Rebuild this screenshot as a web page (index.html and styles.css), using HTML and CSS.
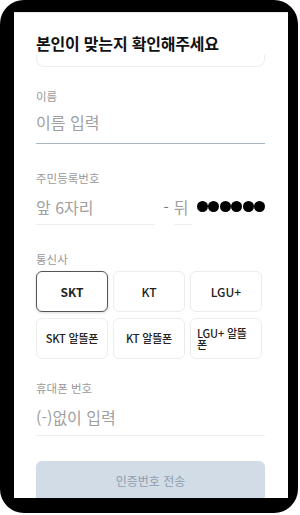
FILE: index.html
```html
<!DOCTYPE html>
<html lang="ko">
<head>
<meta charset="utf-8">
<link rel="stylesheet" href="styles.css">
</head>
<body>
<div class="phone">
  <div class="screen">
    <div class="header">
      <h1 class="title">본인이 맞는지 확인해주세요</h1>
      <div class="header-card"></div>
    </div>

    <div class="field field-name">
      <div class="label">이름</div>
      <div class="input input-active">이름 입력</div>
    </div>

    <div class="field field-rrn">
      <div class="label">주민등록번호</div>
      <div class="rrn-row">
        <div class="input rrn-front">앞 6자리</div>
        <span class="dash">-</span>
        <div class="input rrn-back">뒤</div>
        <div class="dots">
          <span class="dot"></span><span class="dot"></span><span class="dot"></span><span class="dot"></span><span class="dot"></span><span class="dot"></span>
        </div>
      </div>
    </div>

    <div class="field field-carrier">
      <div class="label">통신사</div>
      <div class="carriers">
        <button class="carrier selected">SKT</button>
        <button class="carrier">KT</button>
        <button class="carrier">LGU+</button>
        <button class="carrier small">SKT 알뜰폰</button>
        <button class="carrier small">KT 알뜰폰</button>
        <button class="carrier small wrap">LGU+ 알뜰폰</button>
      </div>
    </div>

    <div class="field field-phone">
      <div class="label">휴대폰 번호</div>
      <div class="input">(-)없이 입력</div>
    </div>

    <button class="submit">인증번호 전송</button>
  </div>
</div>
</body>
</html>
```

FILE: styles.css
```css
* { box-sizing: border-box; }
html, body { margin: 0; padding: 0; background: #fff; }
body {
  font-family: "Noto Sans CJK KR", "Noto Sans", sans-serif;
  width: 300px;
  height: 515px;
}
.phone {
  width: 298px;
  height: 513px;
  background: #000;
  border-radius: 24px;
  padding: 12px 10px 15px 14px;
}
.screen {
  width: 274px;
  height: 486px;
  background: #fff;
  overflow: hidden;
  padding: 0 23px 0 22px;
  border-top: 1px solid #ececec;
}
.header { padding-top: 18px; }
.title {
  margin: 0;
  font-size: 16px;
  line-height: 24px;
  font-weight: 700;
  color: #111;
  letter-spacing: -0.2px;
}
.header-card {
  height: 12px;
  border: 1px solid #ececec;
  border-top: none;
  border-radius: 0 0 8px 8px;
}
.field { display: flex; flex-direction: column; }
.label {
  font-size: 11.5px;
  line-height: 16px;
  color: #9a9a9a;
}
.input {
  font-size: 16px;
  line-height: 24px;
  color: #a0a0a0;
  border-bottom: 1px solid #efefef;
}
.field-name { margin-top: 21px; }
.field-name .label { margin-bottom: 6px; }
.input-active {
  padding-bottom: 9px;
  border-bottom: 1.5px solid #a9b6c6;
}
.field-rrn { margin-top: 26px; }
.field-rrn .label { margin-bottom: 9px; }
.rrn-row { display: flex; align-items: flex-start; }
.rrn-front { width: 121px; padding-bottom: 5px; }
.dash {
  font-size: 15px;
  line-height: 24px;
  color: #777;
  margin: 0 5px 0 8px;
}
.rrn-back { width: 18px; padding-bottom: 5px; }
.dots {
  display: flex;
  gap: 0.5px;
  margin-left: 5px;
  padding-top: 6px;
}
.dot {
  width: 11px;
  height: 11px;
  border-radius: 50%;
  background: #000;
}
.field-carrier { margin-top: 26px; }
.field-carrier .label { margin-bottom: 4px; }
.carriers {
  display: grid;
  grid-template-columns: repeat(3, 72px);
  grid-auto-rows: 41px;
  column-gap: 5px;
  row-gap: 6px;
}
.carrier {
  font-family: inherit;
  background: #fff;
  border: 1px solid #ececec;
  border-radius: 6px;
  font-size: 12px;
  font-weight: 500;
  color: #222;
  padding: 0 10px;
  line-height: 11px;
}
.carrier.selected {
  border: 1px solid #555;
  font-weight: 700;
  box-shadow: 0 1px 3px rgba(0,0,0,0.15);
}
.carrier.small { font-size: 11px; padding: 0 4px; letter-spacing: -0.2px; }
.carrier.wrap { text-align: left; padding: 0 12px 0 6px; line-height: 10.5px; }
.field-phone { margin-top: 21px; }
.field-phone .label { margin-bottom: 9px; }
.field-phone .input { padding-bottom: 6px; }
.submit {
  display: block;
  width: 100%;
  margin-top: 25px;
  height: 44px;
  border: none;
  border-radius: 6px;
  background: #d2dce6;
  color: #8e9cad;
  font-family: inherit;
  font-size: 12px;
  line-height: 16px;
  padding: 12px 0 16px;
}
```
